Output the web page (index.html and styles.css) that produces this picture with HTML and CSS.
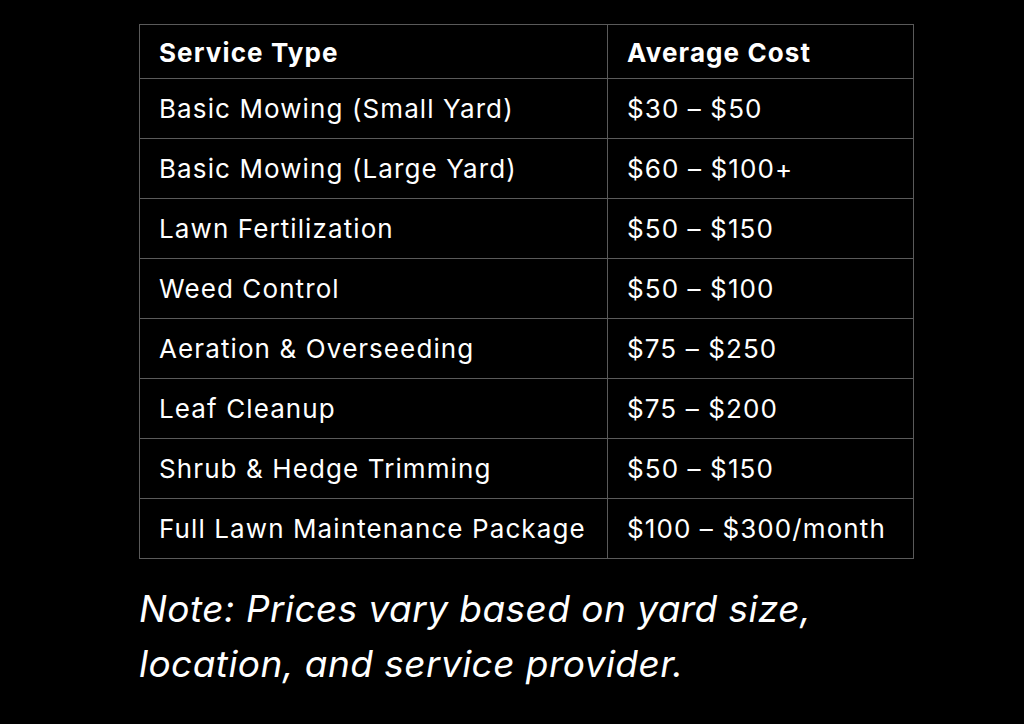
FILE: index.html
```html
<!DOCTYPE html>
<html>
<head>
<meta charset="utf-8">
<link rel="stylesheet" href="styles.css">
</head>
<body>
<div class="wrap">
<table class="costs">
<thead>
<tr><th class="c1">Service Type</th><th>Average Cost</th></tr>
</thead>
<tbody>
<tr><td>Basic Mowing (Small Yard)</td><td>$30 – $50</td></tr>
<tr><td>Basic Mowing (Large Yard)</td><td>$60 – $100+</td></tr>
<tr><td>Lawn Fertilization</td><td>$50 – $150</td></tr>
<tr><td>Weed Control</td><td>$50 – $100</td></tr>
<tr><td>Aeration &amp; Overseeding</td><td>$75 – $250</td></tr>
<tr><td>Leaf Cleanup</td><td>$75 – $200</td></tr>
<tr><td>Shrub &amp; Hedge Trimming</td><td>$50 – $150</td></tr>
<tr><td>Full Lawn Maintenance Package</td><td>$100 – $300/month</td></tr>
</tbody>
</table>
<p class="note">Note: Prices vary based on yard size, location, and service provider.</p>
</div>
</body>
</html>
```
FILE: styles.css
```css
html, body {
  margin: 0;
  padding: 0;
  background: #000;
}
body {
  width: 1024px;
  height: 724px;
  overflow: hidden;
  font-family: Inter, "Noto Sans", sans-serif;
  color: #fff;
}
.wrap {
  padding: 24px 0 0 139px;
}
.costs {
  border-collapse: collapse;
  width: 775px;
  font-size: 26px;
  line-height: 30px;
  letter-spacing: 1.1px;
}
.costs th, .costs td {
  border: 1px solid #5a5a5a;
  text-align: left;
  padding: 0 19px;
  height: 59px;
  white-space: nowrap;
}
.costs th {
  font-weight: 700;
  height: 54px;
  padding-top: 3px;
  box-sizing: border-box;
}
.costs .c1 {
  width: 468px;
}
.note {
  margin: 22px 0 0;
  font-size: 37px;
  font-style: italic;
  letter-spacing: 0.45px;
  line-height: 55px;
  width: 720px;
}
```
